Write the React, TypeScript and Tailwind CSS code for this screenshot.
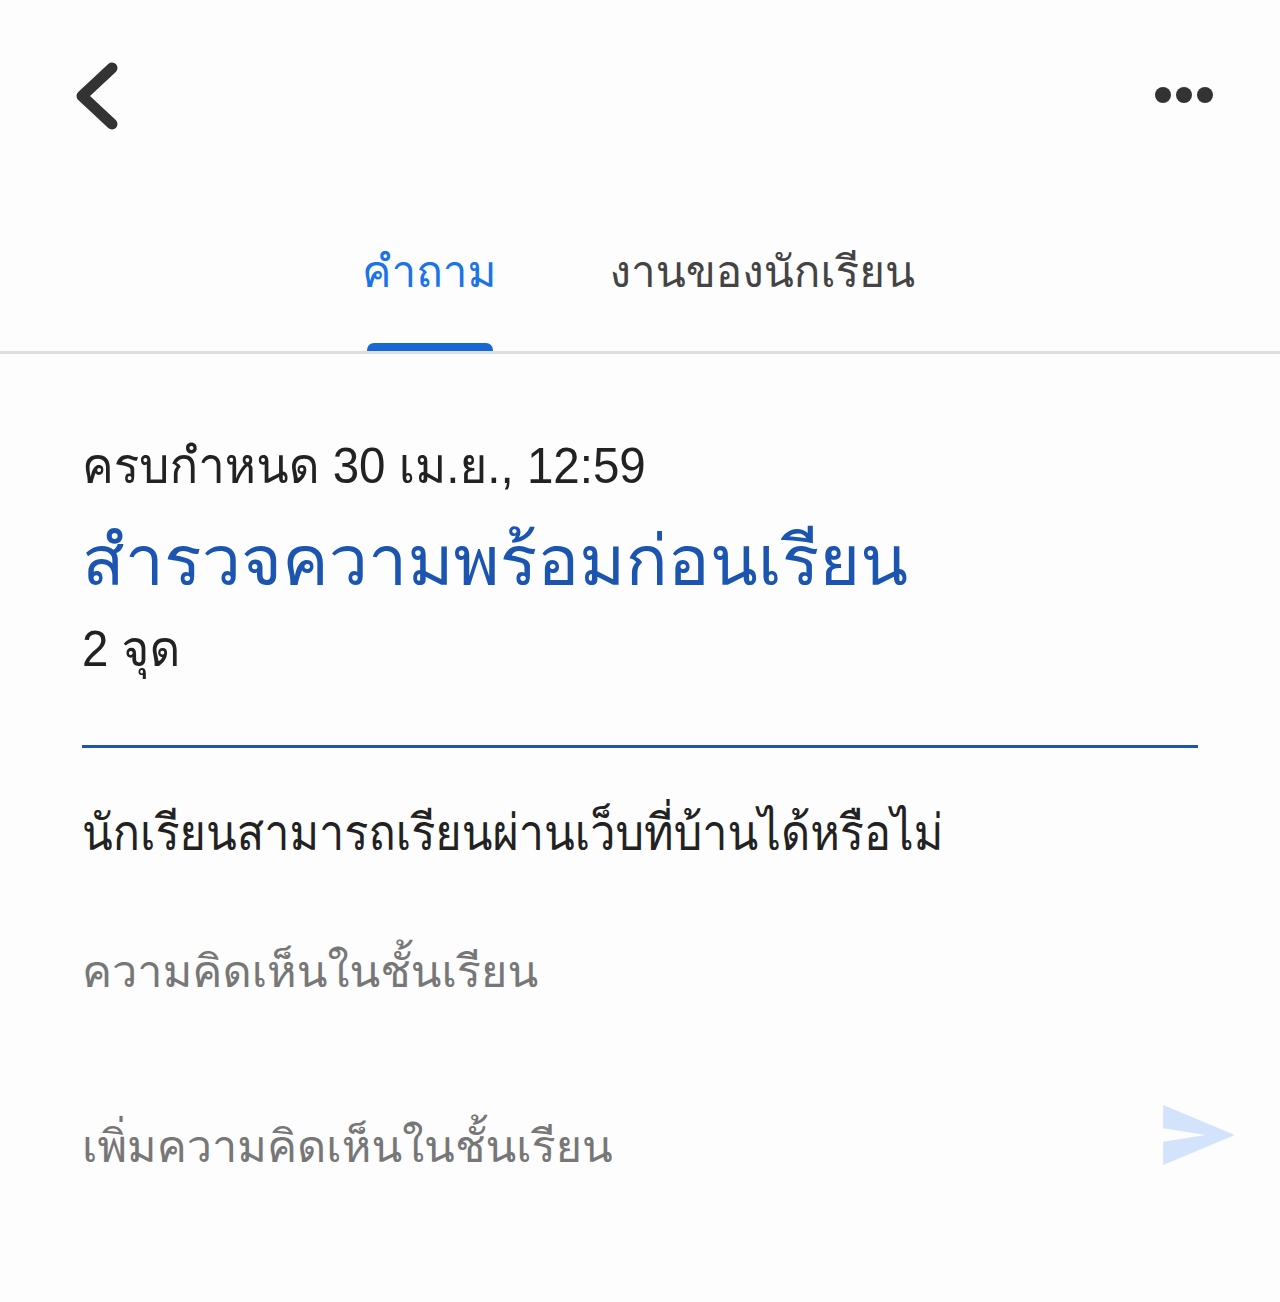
import React from "react";

export default function App() {
  const font = { fontFamily: '"Liberation Sans", "Loma", sans-serif' };
  return (
    <div className="w-[1280px] h-[1302px] bg-[#fdfdfd] overflow-hidden" style={font}>
      {/* top bar */}
      <div className="h-[190px] flex items-start justify-between pt-[60px] pl-[72px] pr-[67px]">
        <svg width="50" height="72" viewBox="0 0 50 72">
          <path d="M40 8 L10 36 L40 64" fill="none" stroke="#333" strokeWidth="11" strokeLinecap="round" strokeLinejoin="round" />
        </svg>
        <div className="flex items-center gap-[5px] mt-[27px]">
          <span className="w-[16px] h-[16px] rounded-full bg-[#333]" />
          <span className="w-[16px] h-[16px] rounded-full bg-[#333]" />
          <span className="w-[16px] h-[16px] rounded-full bg-[#333]" />
        </div>
      </div>
      {/* tabs */}
      <div className="relative h-[164px] border-b-[3px] border-[#dedede]">
        <div className="flex items-start pl-[362px] pt-[32px] gap-[113px]">
          <span className="text-[44px] leading-[100px] text-[#1a73e8]">คำถาม</span>
          <span className="text-[44px] leading-[100px] text-[#444]">งานของนักเรียน</span>
        </div>
        <div className="absolute left-[367px] bottom-0 w-[126px] h-[8px] rounded-t-[7px] bg-[#1967d2]" />
      </div>
      {/* content */}
      <div className="px-[82px]">
        <div className="pt-[82px] text-[50px] leading-[60px] text-[#222] whitespace-nowrap origin-left scale-x-[0.95]">ครบกำหนด 30 เม.ย., 12:59</div>
        <div className="mt-[20px] text-[70px] leading-[90px] text-[#1b55b0] whitespace-nowrap">สำรวจความพร้อมก่อนเรียน</div>
        <div className="mt-[13px] text-[50px] leading-[60px] text-[#222] whitespace-nowrap origin-left scale-x-[0.95]">2 จุด</div>
        <div className="mt-[66px] h-[3px] w-[1116px] bg-[#1b55b0]" />
        <div className="mt-[50px] text-[50px] leading-[70px] text-[#222] whitespace-nowrap origin-left scale-x-[0.9]">นักเรียนสามารถเรียนผ่านเว็บที่บ้านได้หรือไม่</div>
        <div className="mt-[69px] text-[45px] leading-[70px] text-[#777] whitespace-nowrap">ความคิดเห็นในชั้นเรียน</div>
        <div className="mt-[98px] flex items-center justify-between">
          <span className="text-[45px] leading-[70px] text-[#777] whitespace-nowrap">เพิ่มความคิดเห็นในชั้นเรียน</span>
          <svg width="72" height="60" viewBox="0 0 74 62" className="mr-[-37px] mb-[24px]">
            <path d="M0 0 L74 31 L0 62 L0 38 L44 31 L0 24 Z" fill="#d3e3fb" />
          </svg>
        </div>
      </div>
    </div>
  );
}
